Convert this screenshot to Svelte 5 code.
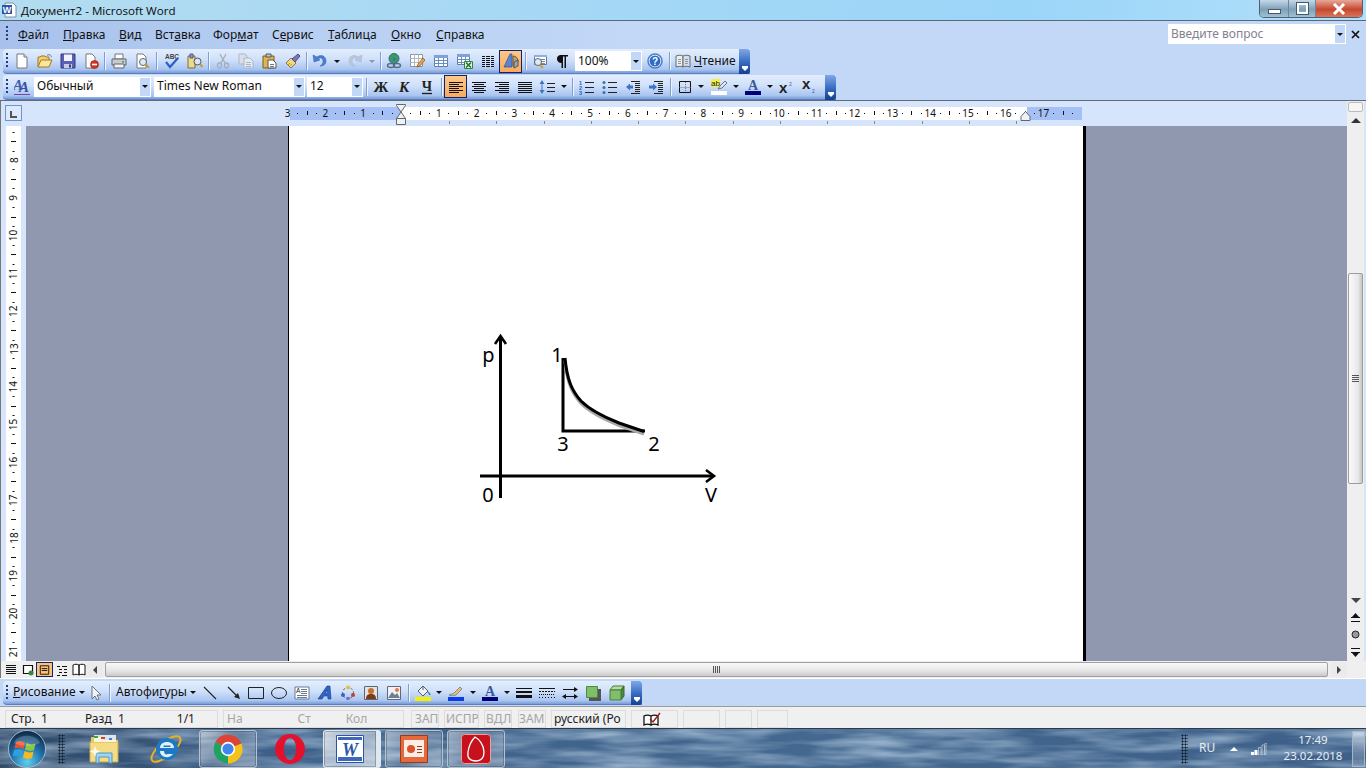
<script>
  const menu = [
    ['', 'Ф', 'айл', 45], ['', 'П', 'равка', 56], ['', 'В', 'ид', 36], ['Вст', 'а', 'вка', 58],
    ['Фор', 'м', 'ат', 59], ['С', 'е', 'рвис', 56], ['', 'Т', 'аблица', 63], ['', 'О', 'кно', 45], ['', 'С', 'правка', 60]
  ];
  const b = (i, w = 23, o = {}) => ({ t: 'b', i, w, ...o });
  const s = (w = 6) => ({ t: 's', w });
  const a = (w = 11, o = {}) => ({ t: 'a', w, ...o });
  const bar1 = [
    b('new'), b('open'), b('save'), b('perm'), s(5), b('print'), b('preview'), s(7), b('spell'), b('research'), s(5),
    b('cut'), b('copy', 24), b('paste'), b('brush'), s(5), b('undo', 22), a(12), b('redo'), a(12, { d: 1 }), s(5),
    b('link', 22), b('tables', 24), b('table', 24), b('excel'), b('cols'), b('draw', 23, { on: 1 }), s(6), b('map'), b('pil')
  ];
  const bar1b = [b('help'), s(6)];
  const bar2a = [b('style')];
  const bar2b = [
    s(6), b('bold'), b('ital'), b('under'), s(6), b('left', 23, { on: 1 }), b('center'), b('right'), b('just'),
    b('space', 22), a(11), s(6), b('num', 24), b('bul', 22), b('out'), b('ind'), s(7), b('border', 21), a(12),
    b('hl'), a(11), b('color'), a(11), b('sup'), b('sub', 24)
  ];
  const draw1 = [s(6)];
  const draw2 = [
    b('line', 25), b('arrow', 23), b('rect', 22), b('oval'), b('tbox'), b('wa'), b('diag'), b('clip'), b('pic'), s(6),
    b('fill', 23), a(10), b('lcolor', 24), a(10), b('color', 24), a(10), b('lines'), b('dash'), b('arrows'), b('shadow', 24), b('cube')
  ];
  const textIcons = ['spell', 'help', 'style', 'bold', 'ital', 'under', 'num', 'hl', 'color', 'sup', 'sub', 'tbox'];
  const hn = [];
  for (let n = -3; n <= 17; n++) hn.push(n);
  const ht = [];
  for (let i = -11; i < 72; i++) if (i % 4 !== 0) ht.push(i);
  const tabs = [];
  for (let k = 0; k < 13; k++) tabs.push(164 + 47.25 * k);
  const vn = [];
  for (let n = 8; n <= 21; n++) vn.push(n);
  const vt = [];
  for (let i = 0; i < 58; i++) if (i % 4 !== 0) vt.push(i);
  const status = [
    { w: 213, m: 5, c: 'on', t: [['Стр.  1', 5], ['Разд  1', 37], ['1/1', 52]] },
    { w: 181, m: 5, c: 'off', t: [['На', 3], ['Ст', 55], ['Кол', 35]] },
    { w: 28, m: 7, c: 'off', t: [['ЗАП', 3]] },
    { w: 35, m: 5, c: 'off', t: [['ИСПР', 1]] },
    { w: 28, m: 5, c: 'off', t: [['ВДЛ', 1]] },
    { w: 28, m: 6, c: 'off', t: [['ЗАМ', 0]] },
    { w: 75, m: 5, c: 'on', t: [['русский (Ро', 2]] }
  ];
</script>

{#snippet textIcon(n)}
  <svg class="ic" viewBox="0 0 16 16">
    {#if n === 'spell'}
      <text x="8" y="6" text-anchor="middle" font-size="6.500" font-weight="700" font-family="Liberation Sans,sans-serif" fill="#444">ABC</text><path d="M2 9l4 5 8-9" fill="none" stroke="#2f5fc4" stroke-width="2.200"/>
    {:else if n === 'help'}
      <circle cx="8" cy="8" r="7" fill="#fff" stroke="#4a7fc4" stroke-width="1.500"/><circle cx="8" cy="8" r="5.500" fill="#2f6cc4"/><text x="8" y="11.500" text-anchor="middle" font-size="10" font-weight="700" font-family="Liberation Sans,sans-serif" fill="#fff">?</text>
    {:else if n === 'style'}
      <text x="-1" y="11" font-size="15" font-style="italic" font-weight="700" font-family="Liberation Serif,serif" fill="#3a5fb0">A</text><text x="5" y="13" font-size="15" font-style="italic" font-weight="700" font-family="Liberation Serif,serif" fill="#3d4ea0">A</text><path d="M0 15.500h16" stroke="#7a3fa0" stroke-width="1"/>
    {:else if n === 'bold'}
      <text x="8" y="13" text-anchor="middle" font-size="15" font-weight="700" font-family="Liberation Serif,serif" fill="#222">Ж</text>
    {:else if n === 'ital'}
      <text x="8" y="13" text-anchor="middle" font-size="15" font-weight="700" font-style="italic" font-family="Liberation Serif,serif" fill="#222">К</text>
    {:else if n === 'under'}
      <text x="8" y="12" text-anchor="middle" font-size="14" font-weight="700" font-family="Liberation Serif,serif" fill="#222">Ч</text><path d="M3 14.500h10" stroke="#222" stroke-width="1.400"/>
    {:else if n === 'num'}
      <text x="0" y="5.500" font-size="5.500" font-weight="700" font-family="Liberation Sans,sans-serif" fill="#2f5fc4">1</text><text x="0" y="10.500" font-size="5.500" font-weight="700" font-family="Liberation Sans,sans-serif" fill="#2f5fc4">2</text><text x="0" y="15.500" font-size="5.500" font-weight="700" font-family="Liberation Sans,sans-serif" fill="#2f5fc4">3</text><path d="M6 3.500h9M6 8.500h9M6 13.500h9" stroke="#222"/>
    {:else if n === 'hl'}
      <path d="M0 0h9v8H0z" fill="#f4f04a"/><text x="4.500" y="7" text-anchor="middle" font-size="8" font-family="Liberation Sans,sans-serif" fill="#222">ab</text><path d="M7 10l2-3 5-5 2 2-5 5z" fill="#dfe7f2" stroke="#6a7686"/><path d="M0 12h16v4H0z" fill="#fff"/>
    {:else if n === 'color'}
      <text x="8" y="11" text-anchor="middle" font-size="14" font-weight="700" font-family="Liberation Serif,serif" fill="#3a5a9e">A</text><path d="M0 12h16v4H0z" fill="#00007e"/>
    {:else if n === 'sup'}
      <text x="0" y="14" font-size="15" font-weight="700" font-family="Liberation Sans,sans-serif" fill="#222">x</text><text x="10" y="7" font-size="5" font-family="Liberation Sans,sans-serif" fill="#3a5a9e">2</text>
    {:else if n === 'sub'}
      <text x="0" y="10" font-size="15" font-weight="700" font-family="Liberation Sans,sans-serif" fill="#222">x</text><text x="10" y="14" font-size="5" font-family="Liberation Sans,sans-serif" fill="#3a5a9e">2</text>
    {:else if n === 'tbox'}
      <path d="M1 2h14v12H1z" fill="#fff" stroke="#6a7a90"/><text x="2" y="8" font-size="6.500" font-family="Liberation Sans,sans-serif" fill="#222">A</text><path d="M7 4.500h6M7 6.500h6M7 8.500h6M3 10.500h10M3 12.500h10" stroke="#6a7a90"/>
    {/if}
  </svg>
{/snippet}

{#snippet items(list)}
  {#each list as it}
    {#if it.t === 's'}
      <span class="cell" style="width:{it.w}px"><i class="sep"></i></span>
    {:else if it.t === 'a'}
      <span class="cell" style="width:{it.w}px"><i class="arr" class:dis={it.d}></i></span>
    {:else}
      <span class="cell" class:on={it.on} style="width:{it.w}px">
        {#if textIcons.includes(it.i)}
          {@render textIcon(it.i)}
        {:else}
          <svg class="ic" viewBox="0 0 16 16"><use href="#i-{it.i}"></use></svg>
        {/if}
      </span>
    {/if}
  {/each}
{/snippet}

<svg class="defs" aria-hidden="true">
  <symbol id="i-new" viewBox="0 0 16 16"><path d="M3 1h7l3 3v11H3z" fill="#fff" stroke="#77797f"/><path d="M10 1v3h3" fill="#dfe6f2" stroke="#77797f"/></symbol>
  <symbol id="i-open" viewBox="0 0 16 16"><path d="M1 14V4h2l1-1h4l1 1h3v3" fill="#f2cf72" stroke="#a57a1e"/><path d="M1 14l3-7h11l-3 7z" fill="#fbe59c" stroke="#a57a1e"/><path d="M10 2.500c2-1.500 4-.8 4.500 1.500" fill="none" stroke="#5077b8"/></symbol>
  <symbol id="i-save" viewBox="0 0 16 16"><path d="M1 1h14v14H1z" fill="#5a5fb8" stroke="#34387e"/><path d="M4 1.500h8V8H4z" fill="#f3f4fb"/><path d="M4 11h8v4H4z" fill="#c9cbe2"/><path d="M9 11.500h2v3H9z" fill="#34387e"/></symbol>
  <symbol id="i-perm" viewBox="0 0 16 16"><path d="M3 1h6l3 3v11H3z" fill="#fff" stroke="#77797f"/><circle cx="11.500" cy="11.500" r="4" fill="#d8321e" stroke="#8c1c10" stroke-width=".6"/><path d="M9 10.700h5v1.600H9z" fill="#fff"/></symbol>
  <symbol id="i-print" viewBox="0 0 16 16"><path d="M4 1h8v5H4z" fill="#fff" stroke="#777"/><path d="M1 6h14v6H1z" fill="#c8ccd2" stroke="#62666d"/><path d="M3 11h10v4H3z" fill="#f2f2f2" stroke="#62666d"/><path d="M11 8h2v1.500h-2z" fill="#2fb33a"/></symbol>
  <symbol id="i-preview" viewBox="0 0 16 16"><path d="M3 1h6l3 3v11H3z" fill="#fff" stroke="#77797f"/><circle cx="9" cy="9" r="3.500" fill="#dcebf7" stroke="#666"/><path d="M11.500 11.500l3.500 3" stroke="#c79a3c" stroke-width="2"/></symbol>
  <symbol id="i-research" viewBox="0 0 16 16"><path d="M1 3h7v12H1z" fill="#ecd98e" stroke="#77703c"/><path d="M3 1h3v4H3z" fill="#8a93c8" stroke="#555b8f"/><circle cx="10.500" cy="8.500" r="3.500" fill="#d9e6f2" stroke="#555"/><path d="M13 11l2.500 3" stroke="#c79a3c" stroke-width="2"/></symbol>
  <symbol id="i-cut" viewBox="0 0 16 16"><g fill="none" stroke="#a5adbb" stroke-width="1.300"><path d="M5 1l5 9M11 1L6 10"/><ellipse cx="4.500" cy="12.500" rx="2" ry="2.500"/><ellipse cx="11.500" cy="12.500" rx="2" ry="2.500"/></g></symbol>
  <symbol id="i-copy" viewBox="0 0 16 16"><path d="M1 1h6l2 2v8H1z" fill="#d8e0ec" stroke="#aeb6c4"/><path d="M6 5h6l3 3v7H6z" fill="#e4eaf3" stroke="#aeb6c4"/><path d="M8 9.500h5M8 11.500h5M8 13.500h5" stroke="#aeb6c4"/></symbol>
  <symbol id="i-paste" viewBox="0 0 16 16"><path d="M1 3h11v12H1z" fill="#e0b451" stroke="#7d5d1c"/><path d="M4 1h5v3H4z" fill="#bfc6d1" stroke="#555"/><path d="M6 7h5l3 3v5H6z" fill="#fff" stroke="#555"/><path d="M8 11.500h4M8 13.500h4" stroke="#777"/></symbol>
  <symbol id="i-brush" viewBox="0 0 16 16"><path d="M1 10l5-5 5 5-5 5z" fill="#f1d886" stroke="#8d7a3a"/><path d="M7 6l6-5 2 2-5 6z" fill="#7d78b8" stroke="#4e4a85"/><path d="M3 12l2-2M5 13l2-2" stroke="#b69a42"/></symbol>
  <symbol id="i-undo" viewBox="0 0 16 16"><path d="M1 2l1 7 6-2-2-1.500c3-1.500 5 0 5 3 0 2-1 3.500-3 4.500 4 0 6-2 6-5 0-5-5-7-9-4z" fill="#4b7fd0" stroke="#2f5da8" stroke-width=".5"/></symbol>
  <symbol id="i-redo" viewBox="0 0 16 16"><path d="M15 2l-1 7-6-2 2-1.500c-3-1.500-5 0-5 3 0 2 1 3.500 3 4.500-4 0-6-2-6-5 0-5 5-7 9-4z" fill="#b9c6db" stroke="#a5b2c8" stroke-width=".5"/></symbol>
  <symbol id="i-link" viewBox="0 0 16 16"><circle cx="8" cy="5.500" r="5" fill="#3f9a5a" stroke="#2a6b8f"/><path d="M5 3c2 1 3 2 2 4s3 1 3-1" fill="#2f6fc0"/><ellipse cx="5" cy="12.500" rx="3.500" ry="2" fill="none" stroke="#586a80" stroke-width="1.400"/><ellipse cx="11" cy="12.500" rx="3.500" ry="2" fill="none" stroke="#586a80" stroke-width="1.400"/></symbol>
  <symbol id="i-tables" viewBox="0 0 16 16"><path d="M1.500 1.500h12v12h-12z" fill="#fff" stroke="#8c94a3"/><path d="M1 5.500h12M1 9.500h12M5.500 1v12M9.500 1v12" stroke="#aeb6c4"/><path d="M8 14l1-3 5-6 2 2-5 6z" fill="#f0a346" stroke="#80521a" stroke-width=".7"/></symbol>
  <symbol id="i-table" viewBox="0 0 16 16"><path d="M1.500 2.500h13v11h-13z" fill="#fff" stroke="#5a7cb0"/><path d="M1 2h14v3H1z" fill="#7ea2d8"/><path d="M1 7.500h14M1 10.500h14M5.500 5v9M10.500 5v9" stroke="#6a8bc0"/></symbol>
  <symbol id="i-excel" viewBox="0 0 16 16"><path d="M.5 1.500h12v10H.5z" fill="#fff" stroke="#5a7cb0"/><path d="M0 1h13v3H0z" fill="#7ea2d8"/><path d="M0 6.500h13M0 9.500h13M4.500 4v8M8.500 4v8" stroke="#6a8bc0"/><path d="M7.500 8.500h8v7h-8z" fill="#e8f4e8" stroke="#2c8a3a"/><path d="M9 9.500l5 5M14 9.500l-5 5" stroke="#1d7a2c" stroke-width="1.600"/></symbol>
  <symbol id="i-cols" viewBox="0 0 16 16"><path d="M2 3.500h12M2 5.500h12M2 7.500h12M2 9.500h12M2 11.500h12M2 13.500h12" stroke="#111" fill="none"/><path d="M5.500 2v13M10.500 2v13" stroke="#d3e2fa" stroke-width="1"/></symbol>
  <symbol id="i-draw" viewBox="0 0 16 16"><path d="M10 3a5 5 0 1 1 0 10z" fill="#c9a05a" stroke="#6a5a40"/><path d="M1 14L7 1h2v13z" fill="#5e85cc" stroke="#2d4f98" stroke-width=".7"/><path d="M11 9l4-2v6l-4 2z" fill="#9aa5b6" stroke="#555"/></symbol>
  <symbol id="i-map" viewBox="0 0 16 16"><path d="M2.500 2.500h12v9h-12z" fill="#fff" stroke="#5b7a9e"/><path d="M2 2h13v2H2z" fill="#8fb0dc"/><path d="M8 6.500h5M8 8.500h5M8 10.500h5" stroke="#7c8794"/><circle cx="6" cy="9" r="3.500" fill="#dcebf7" stroke="#666"/><path d="M8 12l3 3" stroke="#d99a2c" stroke-width="2"/></symbol>
  <symbol id="i-pil" viewBox="0 0 16 16"><path d="M6.500 2C3 2 2 4 2 6s1.500 4 4.500 4v5H8V3.500h1.500V15H11V3.500h2V2z" fill="#111"/></symbol>
  <symbol id="i-book" viewBox="0 0 16 16"><path d="M1 3c3-1 5-1 7 0v11c-2-1-4-1-7 0z" fill="#f0f0ea" stroke="#5f6a76"/><path d="M15 3c-3-1-5-1-7 0v11c2-1 4-1 7 0z" fill="#d9dee6" stroke="#5f6a76"/><path d="M3 6.500h3M3 8.500h3M3 10.500h3M10 6.500h3M10 8.500h3M10 10.500h3" stroke="#8d97a3"/></symbol>
  <symbol id="i-left" viewBox="0 0 16 16"><path d="M1 3.500h14M1 5.500h10M1 7.500h14M1 9.500h10M1 11.500h14M1 13.500h10" stroke="#111"/></symbol>
  <symbol id="i-center" viewBox="0 0 16 16"><path d="M1 3.500h14M3 5.500h10M1 7.500h14M3 9.500h10M1 11.500h14M3 13.500h10" stroke="#111"/></symbol>
  <symbol id="i-right" viewBox="0 0 16 16"><path d="M1 3.500h14M5 5.500h10M1 7.500h14M5 9.500h10M1 11.500h14M5 13.500h10" stroke="#111"/></symbol>
  <symbol id="i-just" viewBox="0 0 16 16"><path d="M1 3.500h14M1 5.500h14M1 7.500h14M1 9.500h14M1 11.500h14M1 13.500h14" stroke="#111"/></symbol>
  <symbol id="i-space" viewBox="0 0 16 16"><path d="M3 1L.5 5h5zM3 15L.5 11h5zM2.500 5v6h1V5z" fill="#3f74c4"/><path d="M8 4.500h8M8 8.500h8M8 12.500h8" stroke="#222"/></symbol>
  <symbol id="i-bul" viewBox="0 0 16 16"><circle cx="2" cy="3.500" r="1.500" fill="#3f6fa8"/><circle cx="2" cy="8.500" r="1.500" fill="#3f6fa8"/><circle cx="2" cy="13.500" r="1.500" fill="#3f6fa8"/><path d="M6 3.500h9M6 8.500h9M6 13.500h9" stroke="#222"/></symbol>
  <symbol id="i-out" viewBox="0 0 16 16"><path d="M6 2.500h9M10 4.500h5M10 6.500h5M10 8.500h5M10 10.500h5M10 12.500h5M6 14.500h9" stroke="#222"/><path d="M1 8l4-3.500v2h3v3H5v2z" fill="#3f74c4"/></symbol>
  <symbol id="i-ind" viewBox="0 0 16 16"><path d="M6 2.500h9M10 4.500h5M10 6.500h5M10 8.500h5M10 10.500h5M10 12.500h5M6 14.500h9" stroke="#222"/><path d="M9 8L5 4.500v2H1v3h4v2z" fill="#3f74c4"/></symbol>
  <symbol id="i-border" viewBox="0 0 16 16"><path d="M2.500 2.500h11v11h-11z" fill="none" stroke="#111"/><path d="M8.500 3v10M2.500 8.500h11" stroke="#777" stroke-dasharray="1 1"/></symbol>
  <symbol id="i-cursor" viewBox="0 0 16 16"><path d="M4 1v13l3-3 2 4 2-1-2-4h4z" fill="#f2f4f8" stroke="#6b7585"/></symbol>
  <symbol id="i-line" viewBox="0 0 16 16"><path d="M2 2l12 12" stroke="#222" stroke-width="1.100"/></symbol>
  <symbol id="i-arrow" viewBox="0 0 16 16"><path d="M2 2l10 10" stroke="#222" stroke-width="1.200"/><path d="M14 14l-6-2 4-4z" fill="#222"/></symbol>
  <symbol id="i-rect" viewBox="0 0 16 16"><path d="M.5 2.500h15v11H.5z" fill="none" stroke="#222" stroke-width="1"/></symbol>
  <symbol id="i-oval" viewBox="0 0 16 16"><ellipse cx="8" cy="8" rx="7.500" ry="5.500" fill="none" stroke="#222"/></symbol>
  <symbol id="i-wa" viewBox="0 0 16 16"><path d="M1 14L10 1h3l1 13h-3l-.3-3H7l-2 3zM8.500 8.500h2l-.3-3.500z" fill="#2f63c4" stroke="#173d8c" stroke-width=".6"/></symbol>
  <symbol id="i-diag" viewBox="0 0 16 16"><circle cx="8" cy="8" r="5.500" fill="none" stroke="#555" stroke-dasharray="2 2"/><circle cx="8" cy="2.500" r="2" fill="#e0c040"/><circle cx="13" cy="10" r="2" fill="#c04030"/><circle cx="3" cy="10" r="2" fill="#4060c0"/><circle cx="8" cy="13.500" r="1.800" fill="#7070d0"/></symbol>
  <symbol id="i-clip" viewBox="0 0 16 16"><path d="M1.500 1.500h13v13h-13z" fill="#dfe3ea" stroke="#666"/><circle cx="8" cy="6" r="3" fill="#c4702a"/><path d="M3 14c0-4 2-5 5-5s5 1 5 5z" fill="#7a3a1e"/></symbol>
  <symbol id="i-pic" viewBox="0 0 16 16"><path d="M1.500 1.500h13v13h-13z" fill="#eef2f8" stroke="#667"/><path d="M2 13l4-6 3 3 2-2 3 5z" fill="#6d7f92"/><circle cx="11" cy="5" r="2" fill="#e57c3c"/></symbol>
  <symbol id="i-fill" viewBox="0 0 16 16"><path d="M0 12h16v4H0z" fill="#f4f000"/><path d="M3 6l5-5 5 5-5 5z" fill="#eef2f8" stroke="#4e5d72"/><path d="M8 1v4" stroke="#4e5d72"/><path d="M13 7c1 1 2 2 2 3" stroke="#3a7ac8" stroke-width="1.500" fill="none"/></symbol>
  <symbol id="i-lcolor" viewBox="0 0 16 16"><path d="M1 10c2-1 4-1 5-2l6-6 2 2-6 6c-2 1-4 1-7 0z" fill="#e8c06a" stroke="#5c6f92" stroke-width=".7"/><path d="M0 12h16v4H0z" fill="#0a3ce8"/></symbol>
  <symbol id="i-lines" viewBox="0 0 16 16"><path d="M0 3.500h16" stroke="#111"/><path d="M0 7h16" stroke="#111" stroke-width="2"/><path d="M0 11.500h16" stroke="#111" stroke-width="3"/></symbol>
  <symbol id="i-dash" viewBox="0 0 16 16"><path d="M0 3.500h16" stroke="#111"/><path d="M0 6.500h16" stroke="#111" stroke-dasharray="2 1"/><path d="M0 9.500h16" stroke="#111" stroke-dasharray="1 1"/><path d="M0 12.500h16" stroke="#111" stroke-dasharray="1 2"/></symbol>
  <symbol id="i-arrows" viewBox="0 0 16 16"><path d="M1 4.500h14M1 11.500h14" stroke="#111"/><path d="M16 4.500l-4-2.500v5zM0 11.500l4-2.500v5zM16 11.500l-4-2.500v5z" fill="#111"/></symbol>
  <symbol id="i-shadow" viewBox="0 0 16 16"><path d="M4 4h12v12H4z" fill="#555"/><path d="M1.500 1.500h11v11h-11z" fill="#7ebf6c" stroke="#4d8a3c"/></symbol>
  <symbol id="i-cube" viewBox="0 0 16 16"><path d="M1 5l3-4h11l-3 4z" fill="#b7dba8" stroke="#4d7a3c"/><path d="M12 5l3-4v10l-3 4z" fill="#4d8a3c" stroke="#3a6a2c"/><path d="M1 5h11v10H1z" fill="#7ebf6c" stroke="#4d7a3c"/></symbol>
</svg>

<div class="app">
  <header class="title">
    <svg class="docicon" viewBox="0 0 16 16"><path d="M4 1h8l3 3v11H4z" fill="#fff" stroke="#7f8ea3"/><path d="M1 3h10v9H1z" fill="#2b55a8"/><text x="6" y="10.500" text-anchor="middle" font-size="9" font-weight="700" fill="#fff" font-family="Liberation Sans,sans-serif">W</text></svg>
    <span class="ttext">Документ2 - Microsoft Word</span>
    <div class="winbtns">
      <span class="wb min"><i></i></span>
      <span class="wb max"><i></i></span>
      <span class="wb close">
        <svg viewBox="0 0 16 12"><path d="M3 1l10 10M13 1L3 11" stroke="#fff" stroke-width="3"/></svg>
      </span>
    </div>
  </header>

  <section class="cmd">
    <nav class="menubar">
      <i class="grip"></i>
      {#each menu as m}
        <span class="mi" style="width:{m[3]}px">{m[0]}<u>{m[1]}</u>{m[2]}</span>
      {/each}
      <div class="ask">
        <span class="askt">Введите вопрос</span>
        <span class="drop"><i class="arr"></i></span>
      </div>
      <svg class="askx" viewBox="0 0 9 9"><path d="M1 1l7 7M8 1L1 8" stroke="#111" stroke-width="1.700"/></svg>
    </nav>
    <div class="bar b1">
      <i class="grip"></i>
      {@render items(bar1)}
      <div class="combo zoomc"><span class="ctext">100%</span><span class="drop"><i class="arr"></i></span></div>
      {@render items(bar1b)}
      <span class="cell read">
        <svg class="ic" viewBox="0 0 16 16"><use href="#i-book"></use></svg><span class="rtext"><u>Ч</u>тение</span>
      </span>
      <span class="over"><i></i></span>
    </div>
    <div class="bar b2">
      <i class="grip"></i>
      {@render items(bar2a)}
      <div class="combo stylec"><span class="ctext">Обычный</span><span class="drop"><i class="arr"></i></span></div>
      <div class="combo fontc"><span class="ctext">Times New Roman</span><span class="drop"><i class="arr"></i></span></div>
      <div class="combo sizec"><span class="ctext">12</span><span class="drop"><i class="arr"></i></span></div>
      {@render items(bar2b)}
      <span class="over"><i></i></span>
    </div>
  </section>

  <section class="doc">
    <div class="docmain">
      <div class="rulerrow">
        <span class="corner"><i></i></span>
        <svg class="hruler" width="800" height="22" viewBox="0 0 800 22">
          <rect x="5" y="3" width="792" height="13" fill="#a4c0f4"/>
          <rect x="116" y="3" width="626" height="13" fill="#fff"/>
          {#each hn as n}
            {#if n !== 0}
              <text x={116 + 37.8 * n} y="13" text-anchor="middle" class="rn">{Math.abs(n)}</text>
            {/if}
          {/each}
          {#each ht as i}
            {#if i % 2 === 0}
              <rect x={Math.round(116 + 9.45 * i)} y="7" width="1" height="4" fill="#111"/>
            {:else}
              <rect x={Math.round(116 + 9.45 * i)} y="9" width="1" height="1" fill="#111"/>
            {/if}
          {/each}
          {#each tabs as t}
            <rect x={Math.round(t)} y="17" width="1" height="3" fill="#888"/>
          {/each}
          <path d="M111.500 0.500h9v1l-4.500 6.500-4.500-6.500zM111.500 14.500l4.500-6.500 4.500 6.500zM111.500 14.500h9v6h-9z" fill="#eef2f8" stroke="#666"/>
          <path d="M740.500 7.500l4.500 5v4h-9v-4z" fill="#eef2f8" stroke="#666"/>
        </svg>
      </div>
      <div class="work">
        <div class="left">
          <svg class="vruler" width="15" height="535" viewBox="0 0 15 535">
            {#each vn as n}
              <text x="7.500" y={34 + 37.8 * (n - 8)} transform="rotate(-90 7.500 {34 + 37.8 * (n - 8)})" text-anchor="middle" dominant-baseline="central" class="rn">{n}</text>
            {/each}
            {#each vt as i}
              {#if i % 2 === 0}
                <rect x="5" y={Math.round(-3.800 + 9.450 * i)} width="5" height="1" fill="#111"/>
              {:else}
                <rect x="6.500" y={Math.round(-3.800 + 9.450 * i)} width="2" height="1" fill="#111"/>
              {/if}
            {/each}
          </svg>
        </div>
        <article class="page">
          <svg class="graph" width="260" height="180" viewBox="0 0 260 180">
            <g fill="none" stroke="#000" stroke-width="3">
              <path d="M30.500 168V7"/>
              <path d="M25 14l5.500-8 5.500 8" stroke-width="2.600"/>
              <path d="M10 146H243"/>
              <path d="M236 140l8 6-8 6" stroke-width="2.600"/>
              <path d="M93 28V101H175"/>
              <path d="M96 29c2 22 7 33 16 43 10 10 23 16 38 22l25 8.500" stroke="#a8a8a8" transform="translate(-1 1.500)"/>
              <path d="M95 28c2 22 7 33 16 43 10 10 23 16 38 22l25 8.500"/>
            </g>
            <g class="gt" text-anchor="middle">
              <text x="18.500" y="32">p</text>
              <text x="87" y="32">1</text>
              <text x="93" y="121">3</text>
              <text x="184" y="121">2</text>
              <text x="18" y="172">0</text>
              <text x="241" y="172">V</text>
            </g>
          </svg>
        </article>
      </div>
    </div>
    <aside class="vscroll">
      <span class="split"></span>
      <span class="sb up"><i class="tri-u"></i></span>
      <span class="track1"></span>
      <span class="thumb"><i></i><i></i><i></i><i></i></span>
      <span class="track2"></span>
      <span class="sb down"><i class="tri-d"></i></span>
      <span class="browse">
        <svg viewBox="0 0 9 9" width="9" height="9"><path d="M0 4h9v1H0zM4.500 0L8 4H1zM0 8h9v1H0z" fill="#111"/></svg>
        <svg viewBox="0 0 9 9" width="9" height="9"><circle cx="4.500" cy="4.500" r="3.500" fill="#999" stroke="#222"/></svg>
        <svg viewBox="0 0 9 9" width="9" height="9"><path d="M0 0h9v1H0zM4.500 9L8 5H1zM0 4h9v1H0z" fill="#111"/></svg>
      </span>
    </aside>
  </section>

  <div class="hscroll">
    <span class="vbtn"><svg viewBox="0 0 16 16"><path d="M3 3.500h10M3 5.500h10M3 7.500h10M3 9.500h10M3 11.500h10" stroke="#111"/></svg></span>
    <span class="vbtn"><svg viewBox="0 0 16 16"><path d="M3.500 3.500h9v8h-9z" fill="#fff" stroke="#111" stroke-width="1.200"/><circle cx="11" cy="11" r="2.500" fill="#2f8a3c"/></svg></span>
    <span class="vbtn act"><svg viewBox="0 0 16 16"><path d="M3.500 3.500h9v9h-9z" fill="none" stroke="#111"/><path d="M5 6.500h6M5 8.500h6" stroke="#111"/></svg></span>
    <span class="vbtn"><svg viewBox="0 0 16 16"><path d="M3 4.500h3M8 4.500h5M5 7.500h3M10 7.500h3M5 10.500h3M10 10.500h3M3 13.500h3M8 13.500h5" stroke="#111"/></svg></span>
    <span class="vbtn"><svg viewBox="0 0 16 16"><path d="M2 3c2-1 4-1 6 0v10c-2-1-4-1-6 0zM14 3c-2-1-4-1-6 0v10c2-1 4-1 6 0z" fill="#fff" stroke="#111"/></svg></span>
    <span class="harrow"><i class="tri-l"></i></span>
    <span class="hthumb"><span class="hgrip"><i></i><i></i><i></i><i></i></span></span>
    <span class="harrow r"><i class="tri-r"></i></span>
  </div>

  <section class="drawrow">
    <div class="bar dbar">
      <i class="grip"></i>
      <span class="mnu m1"><span><u>Р</u>исование</span><i class="arr"></i></span>
      <span class="cell" style="width:21px"><svg class="ic" viewBox="0 0 16 16"><use href="#i-cursor"></use></svg></span>
      {@render items(draw1)}
      <span class="mnu m2"><span>Автофи<u>г</u>уры</span><i class="arr"></i></span>
      {@render items(draw2)}
      <span class="over"><i></i></span>
    </div>
  </section>

  <footer class="status">
    {#each status as st}
      <span class="sbox {st.c}" style="width:{st.w}px;margin-left:{st.m}px">
        {#each st.t as p}
          <span class="st" style="margin-left:{p[1]}px">{p[0]}</span>
        {/each}
      </span>
    {/each}
    <span class="sbox" style="width:47px;margin-left:5px"><svg viewBox="0 0 18 14" width="18" height="14" class="bookchk"><path d="M1 4c2-1 5-1 7 0v9c-2-1-5-1-7 0zM15 4c-2-1-5-1-7 0v9c2-1 5-1 7 0z" fill="#fff" stroke="#111" stroke-width="1.300"/><path d="M7 7l3 3 7-9" fill="none" stroke="#a01818" stroke-width="1.400"/></svg></span>
    <span class="sbox" style="width:37px;margin-left:5px"></span>
    <span class="sbox" style="width:27px;margin-left:5px"></span>
    <span class="sbox" style="width:31px;margin-left:5px"></span>
  </footer>

  <div class="taskbar">
    <svg class="water" width="1366" height="40" aria-hidden="true">
      <filter id="wv"><feTurbulence type="fractalNoise" baseFrequency="0.012 0.09" numOctaves="3" seed="7"/><feColorMatrix values="0 0 0 0 .40  0 0 0 0 .54  0 0 0 0 .70  1.800 0 0 0 -.6"/></filter>
      <rect width="1366" height="40" filter="url(#wv)"/>
    </svg>
    <span class="orb">
      <svg viewBox="0 0 38 38" width="38" height="38">
        <defs><radialGradient id="og" cx=".5" cy=".85" r=".8"><stop offset="0" stop-color="#5fd0ef"/><stop offset=".55" stop-color="#1f6ea8"/><stop offset="1" stop-color="#0e2d4a"/></radialGradient></defs>
        <circle cx="19" cy="19" r="18.500" fill="url(#og)" stroke="#b8ccd8" stroke-width=".8"/>
        <path d="M8 12c3-1.500 6-1 9 .5l-1.500 6.500c-3-1.500-6-1.500-9-.5z" fill="#e8532c"/>
        <path d="M18.500 13c3 1.500 6 2 9 .5L26 20c-3 1.500-6 1-9-.5z" fill="#8dc63f"/>
        <path d="M6 20c3-1 6-1 9 .5L13.500 27c-3-1.500-6-1.500-9-.5z" fill="#2f9fe0"/>
        <path d="M16.500 21c3 1.500 6 2 9 .5L24 28c-3 1.500-6 1-9-.5z" fill="#f5b921"/>
        <path d="M6 13C9 4 28 3 32 13c-8 4-18 4-26 0z" fill="#fff" opacity=".2"/>
      </svg>
    </span>
    <i class="tgrip"></i>
    <div class="apps">
      <span class="app-b">
        <svg viewBox="0 0 32 32" width="32" height="32"><path d="M2 9h28v20H2z" fill="#f3dc86" stroke="#c7a94e"/><path d="M3 4h11l2 3h14v3H3z" fill="#e9c860"/><path d="M6 2h22v7H6z" fill="#fff" opacity=".8"/><path d="M6 3h4v2H6z" fill="#37a93c"/><path d="M13 4h4v2h-4z" fill="#d8402c"/><path d="M21 5h3v2h-3z" fill="#3a7fd0"/><path d="M8 30V20h16v10h-3v-6H11v6z" fill="#9fd6ef" stroke="#4f97c4"/><path d="M7 13l1.500 4 4 1.500-4 1.500L7 24l-1.500-4-4-1.500 4-1.500z" fill="#fff" opacity=".8"/></svg>
      </span>
      <span class="app-b">
        <svg viewBox="0 0 32 32" width="32" height="32"><ellipse cx="16" cy="16" rx="18" ry="7" transform="rotate(-40 16 16)" fill="none" stroke="#e8b225" stroke-width="2"/><circle cx="17" cy="16" r="11" fill="#1f78c4"/><path d="M10 15h14c0-8-14-8-14 0zM10 18c0 7 10 8 13 3h-5c-2 1-4 0-4-3z" fill="#dff1fb"/><path d="M13.500 12.500h7v1.500h-7z" fill="#1f78c4"/></svg>
      </span>
      <span class="app-b glass">
        <svg viewBox="0 0 30 30" width="30" height="30"><path d="M15 15L2.500 8A14.500 14.500 0 0 1 28.500 9.500z" fill="#dc4437"/><path d="M15 15L28.500 9.500A14.500 14.500 0 0 1 15 29.500z" fill="#f6c216"/><path d="M15 15L15 29.500A14.500 14.500 0 0 1 2.500 8z" fill="#1ea362"/><circle cx="15" cy="15" r="7.200" fill="#fff"/><circle cx="15" cy="15" r="5.600" fill="#4285f0"/></svg>
      </span>
      <span class="app-b">
        <svg viewBox="0 0 30 30" width="30" height="30"><path fill-rule="evenodd" d="M15 0a15 15 0 1 0 0 30 15 15 0 1 0 0-30zM15 4c-4 0-6 5-6 11s2 11 6 11 6-5 6-11-2-11-6-11z" fill="#e3112c"/></svg>
      </span>
      <span class="app-b glass light stack">
        <svg viewBox="0 0 28 28" width="28" height="28"><path d="M.5.500h27v27H.5z" fill="#fff" stroke="#2b55a8"/><path d="M2 2h24v3H2z" fill="#3c68bd"/><path d="M2 22h24v4H2z" fill="#3c68bd"/><text x="14" y="21" text-anchor="middle" font-size="18" font-weight="700" font-style="italic" font-family="Liberation Serif,serif" fill="#2b55a8">W</text></svg>
      </span>
      <span class="app-b glass">
        <svg viewBox="0 0 28 28" width="28" height="28"><path d="M.5.500h27v27H.5z" fill="#e5693a" stroke="#9a3a18"/><path d="M4 5h20v17H4z" fill="#fbeee6"/><circle cx="11" cy="14" r="4" fill="#d9542a"/><path d="M17 11.500h5M17 14.500h5M17 17.500h5" stroke="#9a3a18"/></svg>
      </span>
      <span class="app-b glass">
        <svg viewBox="0 0 30 30" width="30" height="30"><rect x=".5" y=".5" width="29" height="29" rx="3" fill="#c7121e" stroke="#e6a0a0"/><path d="M15 27c-6 0-9-3-8-9 1-7 4-12 7-15 4 2 9 8 9 15 0 6-3 9-8 9z" fill="none" stroke="#fff" stroke-width="1.300"/></svg>
      </span>
    </div>
    <div class="tray">
      <i class="tgrip"></i>
      <span class="ru">RU</span>
      <i class="trayup"></i>
      <svg class="sig" viewBox="0 0 16 12" width="16" height="12"><path d="M0 9h3v3H0zM3.500 7h3v5h-3z" fill="#fff"/><path d="M7.500 4.500h2.500V12H7.500zM11 2h2.500v10H11zM14 0h2v12h-2z" fill="none" stroke="#c4d0dc" stroke-width=".7"/></svg>
      <span class="clock"><span>17:49</span><span>23.02.2018</span></span>
      <span class="desk"></span>
    </div>
  </div>
</div>

<style>
  :global(body) { margin: 0; background: #c3d8f7; overflow: hidden; }
  .defs { position: absolute; width: 0; height: 0; }
  .app {
    width: 1366px; height: 768px; display: flex; flex-direction: column; overflow: hidden;
    font-family: "Noto Sans", "DejaVu Sans", sans-serif; font-size: 12px; color: #111;
  }
  i { display: block; font-style: normal; }

  .title {
    height: 21px; box-sizing: border-box; flex: none; display: flex; align-items: center; padding-left: 1px;
    border-bottom: 1px solid #59697a;
    background: linear-gradient(100deg, #b3dcf0 0%, #a6d8f5 40%, #9bd5f8 75%, #b2e0fb 100%);
  }
  .docicon { width: 16px; height: 16px; }
  .ttext { margin-left: 4px; font-family: "Open Sans", sans-serif; font-size: 11.600px; color: #0a0a0a; }
  .winbtns { margin-left: auto; margin-right: 3px; display: flex; height: 17px; align-self: flex-start; border: 1px solid #50606e; border-top: 0; border-radius: 0 0 5px 5px; overflow: hidden; }
  .wb { display: flex; align-items: center; justify-content: center; }
  .min { width: 28px; background: linear-gradient(#c3d9e8, #7fa0b8 55%, #a0c0d4); border-right: 1px solid #6f8698; }
  .min i { width: 11px; height: 3px; margin-top: 5px; background: #fff; border: 1px solid #44586a; }
  .max { width: 26px; background: linear-gradient(#c3d9e8, #7fa0b8 55%, #a0c0d4); border-right: 1px solid #6f8698; }
  .max i { width: 7px; height: 7px; border: 2px solid #fff; outline: 1px solid #44586a; }
  .close { width: 46px; background: linear-gradient(#e6a899, #c6472f 55%, #d9765c); }
  .close svg { width: 16px; height: 12px; }

  .cmd { height: 80px; box-sizing: border-box; flex: none; display: flex; flex-direction: column; border-bottom: 1px solid #5f6b78; background: #c3d8f7; }
  .menubar {
    height: 28px; flex: none; display: flex; align-items: center; padding: 0 0 2px 5px; box-sizing: border-box;
    background: linear-gradient(90deg, #a7c1ec 0, #b7cff2 300px, #c3d8f7 640px);
    position: relative;
  }
  .grip {
    width: 2px; height: 16px; flex: none;
    background: repeating-linear-gradient(#1d3f86 0 2px, transparent 2px 4px);
  }
  .menubar .grip { margin-right: 10px; margin-left: 1px; }
  .mi { flex: none; font-size: 12px; }
  .ask { margin-left: 672px; width: 178px; height: 20px; background: #fff; display: flex; align-items: center; justify-content: space-between; flex: none; }
  .askt { padding: 0 0 1px 3px; color: #85808f; font-size: 12px; }
  .drop { width: 12px; height: 100%; background: #c3d8f7; display: flex; align-items: center; justify-content: center; border: 1px solid #fff; box-sizing: border-box; flex: none; }
  .askx { width: 9px; height: 9px; margin-left: 5px; flex: none; }
  .arr { width: 0; height: 0; border: 3px solid transparent; border-top: 3px solid #111; border-bottom: 0; }
  .arr.dis { border-top-color: #8d97a8; }

  .bar {
    display: flex; align-items: center; box-sizing: border-box; margin-left: 3px; padding-left: 3px; flex: none;
    border-radius: 4px 0 0 4px;
    background: linear-gradient(#e3eefd, #cfe0fa 45%, #a9c5f0 85%, #7a9bd6);
    border-bottom: 1px solid #5c7fc0;
  }
  .b1 { width: 747px; height: 25px; margin-top: 0; }
  .b2 { width: 833px; height: 24.500px; margin-top: 1px; }
  .bar > .grip { margin-right: 2px; margin-left: 0; }
  .cell { flex: none; display: flex; align-items: center; justify-content: center; height: 23px; box-sizing: border-box; }
  .cell.on { border: 1px solid #10226e; background: linear-gradient(#fdc88a, #fba95c); }
  .ic { width: 16px; height: 16px; display: block; flex: none; }
  .sep { width: 1px; height: 18px; background: #7f9fd2; box-shadow: 1px 0 0 #eef4fe; }
  .combo { display: flex; align-items: center; background: #fff; height: 20px; box-sizing: border-box; flex: none; }
  .ctext { flex: 1; padding: 0 0 2px 3px; white-space: nowrap; overflow: hidden; }
  .zoomc { width: 67px; margin: 0 1px; }
  .stylec { width: 117px; margin: 0 3px 0 1px; }
  .fontc { width: 151px; margin-right: 2px; }
  .sizec { width: 56px; }
  .read { width: 65px; gap: 3px; justify-content: flex-start; padding-left: 3px; }
  .rtext { white-space: nowrap; padding-bottom: 2px; }
  .over {
    margin-left: auto; width: 11px; align-self: stretch; flex: none; display: flex; align-items: flex-end; justify-content: center; padding-bottom: 3px; box-sizing: border-box;
    background: linear-gradient(#7fa8e8, #3668c0 55%, #153f90); border-radius: 0 3px 3px 0; margin-bottom: -1px;
  }
  .over i { width: 0; height: 0; border: 3px solid transparent; border-top: 3px solid #fff; border-bottom: 0; box-shadow: 0 -2px 0 #fff; }

  .doc { flex: none; height: 560px; display: flex; background: #d6e5fb; }
  .docmain { width: 1347px; display: flex; flex-direction: column; flex: none; border-left: 1px solid #777; box-sizing: border-box; }
  .rulerrow { height: 25px; flex: none; display: flex; align-items: flex-start; background: #d6e5fb; }
  .corner { width: 17px; height: 16px; margin: 4px 0 0 4px; flex: none; box-sizing: border-box; border: 1px solid #6f94c9; background: #dde9fc; display: flex; align-items: center; justify-content: center; }
  .corner i { width: 5px; height: 5px; border-left: 2px solid #555; border-bottom: 2px solid #555; margin-top: 2px; }
  .hruler { margin: 3px 0 0 263px; flex: none; display: block; }
  .rn { font-family: "Noto Sans", sans-serif; font-size: 10px; fill: #111; }
  .work { flex: 1; display: flex; min-height: 0; background: #8f98ae; }
  .left { width: 25px; flex: none; background: #d6e5fb; padding-left: 5px; box-sizing: border-box; }
  .vruler { display: block; background: #fff; }
  .page { width: 798px; margin-left: 262px; flex: none; box-sizing: border-box; background: #fff; border-left: 1px solid #000; border-right: 3px solid #000; padding: 204px 0 0 181px; }
  .graph { display: block; }
  .gt text { font-family: "Noto Sans", sans-serif; font-size: 20px; fill: #000; }

  .vscroll { width: 17px; flex: none; display: flex; flex-direction: column; background: #efefef; }
  .split { height: 10px; margin: 1px 1px 0; background: #f6f6f6; border: 1px solid #bbb; border-radius: 2px; box-sizing: border-box; flex: none; }
  .sb { height: 17px; flex: none; display: flex; align-items: center; justify-content: center; }
  .tri-u { border: 5px solid transparent; border-bottom: 5px solid #333; border-top: 0; width: 0; height: 0; }
  .tri-d { border: 5px solid transparent; border-top: 5px solid #444; border-bottom: 0; width: 0; height: 0; }
  .track1 { height: 144px; flex: none; }
  .thumb { height: 211px; flex: none; box-sizing: border-box; margin: 0 1px; border: 1px solid #9c9c9c; border-radius: 2px; background: linear-gradient(90deg, #fafafa, #e8e8e8 70%, #c5c5c5); display: flex; flex-direction: column; align-items: center; justify-content: center; gap: 1px; }
  .thumb i { width: 7px; height: 1px; background: #555; }
  .track2 { flex: 1; }
  .browse { height: 52px; flex: none; display: flex; flex-direction: column; align-items: center; justify-content: space-around; box-sizing: border-box; }

  .hscroll { height: 17px; flex: none; display: flex; align-items: center; background: #efefef; padding-left: 1px; box-sizing: border-box; border-left: 1px solid #777; }
  .vbtn { width: 17px; height: 15px; flex: none; display: flex; align-items: center; justify-content: center; box-sizing: border-box; }
  .vbtn svg { width: 16px; height: 16px; }
  .vbtn.act { background: #fdc078; border: 1px solid #10226e; }
  .harrow { width: 16px; flex: none; height: 15px; display: flex; align-items: center; justify-content: center; background: #ebebeb; }
  .harrow.r { margin-left: 3px; }
  .tri-l { border: 4px solid transparent; border-right: 4px solid #444; border-left: 0; width: 0; height: 0; }
  .tri-r { border: 4px solid transparent; border-left: 4px solid #444; border-right: 0; width: 0; height: 0; }
  .hthumb { width: 1223px; height: 15px; margin-left: 2px; flex: none; box-sizing: border-box; border: 1px solid #a0a0a0; border-radius: 2px; background: linear-gradient(#f8f8f8, #e6e6e6 60%, #c9c9c9); display: flex; align-items: center; justify-content: center; }
  .hgrip { display: flex; gap: 1px; }
  .hgrip i { width: 1px; height: 7px; background: #555; }

  .drawrow { height: 29px; flex: none; box-sizing: border-box; padding-top: 2px; background: #c3d8f7; border-top: 1px solid #fff; border-bottom: 1px solid #9c9c9c; }
  .dbar { width: 639px; height: 24px; }
  .mnu { display: flex; align-items: center; flex: none; gap: 3px; white-space: nowrap; }
  .mnu span { padding-bottom: 2px; }
  .m1 { width: 75px; padding-left: 3px; box-sizing: border-box; }
  .m2 { width: 85px; padding-left: 4px; box-sizing: border-box; }

  .status { height: 21px; flex: none; box-sizing: border-box; display: flex; align-items: flex-end; background: #f0f0f0; color: #222; }
  .sbox { height: 18px; flex: none; box-sizing: border-box; border: 1px solid #dcdcdc; display: flex; align-items: center; white-space: nowrap; overflow: hidden; }
  .st { white-space: pre; flex: none; padding-bottom: 1px; }
  .sbox.off { color: #a5a5a5; }
  .bookchk { margin-left: 11px; }

  .taskbar {
    height: 40px; flex: none; position: relative; display: flex; align-items: center; box-sizing: border-box; border-top: 1px solid #2b3a4c;
    background: linear-gradient(90deg, #2e4866, #3d5f88 20%, #44688f 60%, #3d5f88);
  }
  .water { position: absolute; left: 0; top: 0; opacity: .85; }
  .orb { position: relative; margin-left: 8px; width: 38px; height: 38px; flex: none; }
  .tgrip { position: relative; width: 7px; height: 30px; flex: none; background-image: radial-gradient(circle, #12202f 45%, transparent 50%); background-size: 3px 3px; }
  .orb + .tgrip { margin-left: 12px; }
  .apps { position: relative; display: flex; gap: 4px; margin-left: 10px; }
  .app-b { width: 58px; height: 38px; flex: none; box-sizing: border-box; display: flex; align-items: center; justify-content: center; border-radius: 3px; border: 1px solid transparent; }
  .glass { border-color: #b3c3d2; background: linear-gradient(135deg, rgba(255,255,255,.5), rgba(255,255,255,.15) 50%, rgba(255,255,255,.28)); box-shadow: inset 0 0 0 1px rgba(30,50,70,.3); }
  .light { background: linear-gradient(135deg, rgba(255,255,255,.75), rgba(255,255,255,.45) 60%, rgba(255,255,255,.6)); border-color: #dfe7ef; }
  .stack { border-right-width: 5px; }
  .tray { position: relative; margin-left: auto; display: flex; align-items: center; color: #e8edf3; height: 100%; }
  .ru { margin-left: 11px; width: 26px; font-size: 12px; padding-bottom: 3px; }
  .trayup { width: 0; height: 0; border: 4px solid transparent; border-bottom: 4px solid #fff; border-top: 0; margin-right: 13px; margin-left: 5px; }
  .sig { flex: none; }
  .clock { width: 70px; margin: -2px 0 0 11px; display: flex; flex-direction: column; align-items: center; font-size: 11.500px; line-height: 16px; }
  .desk { width: 13px; height: 36px; margin-left: 4px; margin-right: 1px; box-sizing: border-box; border: 1px solid #a7b6c4; background: linear-gradient(rgba(255,255,255,.4), rgba(255,255,255,.12)); }
</style>
